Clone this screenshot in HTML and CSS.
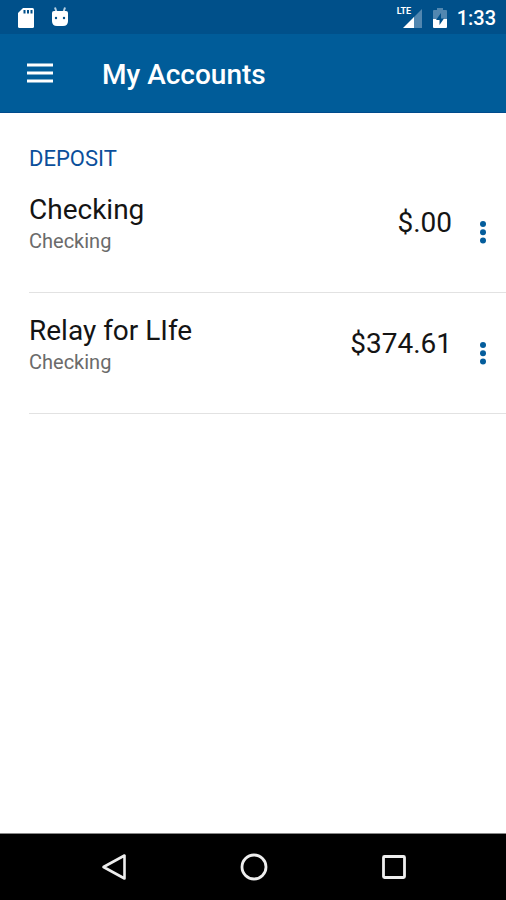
FILE: index.html
```html
<!DOCTYPE html>
<html lang="en">
<head>
<meta charset="utf-8">
<meta name="viewport" content="width=device-width, initial-scale=1">
<title>My Accounts</title>
<link rel="stylesheet" href="styles.css">
</head>
<body>
<div class="status-bar">
  <div class="status-group status-left">
    <svg class="icon-sd" viewBox="0 0 18 22" aria-hidden="true">
      <path fill="#fff" d="M6 1H15.500Q17 1 17 2.500V19.500Q17 21 15.500 21H2.500Q1 21 1 19.500V6Z"/>
      <path stroke="#00508a" stroke-width="2" d="M7.500 3V6.500M11 3V6.500M14.500 3V6.500"/>
    </svg>
    <svg class="icon-droid" viewBox="0 0 18 22" aria-hidden="true">
      <path stroke="#b9d3e5" stroke-width="2" fill="none" d="M4 0.500L5.500 5M14 0.500L12.500 5"/>
      <path fill="#fff" d="M1 6Q1 4 3 4H15Q17 4 17 6V14Q17 19 12 19H6Q1 19 1 14Z"/>
      <circle cx="5" cy="11" r="1.200" fill="#00508a"/>
      <circle cx="13" cy="11" r="1.200" fill="#00508a"/>
    </svg>
  </div>
  <div class="status-group status-right">
    <div class="signal">
      <span class="network">LTE</span>
      <svg class="icon-signal" viewBox="0 0 26 22" aria-hidden="true">
        <path fill="#5287b0" d="M25 2V21H16V11Z"/>
        <path fill="#fff" d="M17 10V21H6Z"/>
      </svg>
    </div>
    <svg class="icon-battery" viewBox="0 0 16 22" aria-hidden="true">
      <path fill="#5287b0" d="M5 1H11V3H14Q15 3 15 4V12H1V4Q1 3 2 3H5Z"/>
      <path fill="#fff" d="M1 12H15V20Q15 21 14 21H2Q1 21 1 20Z"/>
      <path fill="#00508a" d="M9 6L4 13H7.500V18L12 11.500H9Z"/>
    </svg>
    <span class="clock">1:33</span>
  </div>
</div>
<header class="app-bar">
  <button class="menu-button" type="button" aria-label="Menu">
    <svg viewBox="0 0 28 22" aria-hidden="true"><path stroke="#fff" stroke-width="3" d="M1 3H27M1 11H27M1 19H27"/></svg>
  </button>
  <h1 class="app-title">My Accounts</h1>
</header>
<main class="content">
  <h2 class="section-title">DEPOSIT</h2>
  <ul class="accounts">
    <li class="account">
      <div class="account-info">
        <h3 class="account-name">Checking</h3>
        <p class="account-type">Checking</p>
      </div>
      <span class="account-balance">$.00</span>
      <button class="more-button" type="button" aria-label="Options for Checking">
        <svg viewBox="0 0 8 24" aria-hidden="true"><g fill="#045d9c"><circle cx="4" cy="4" r="3"/><circle cx="4" cy="12.300" r="3"/><circle cx="4" cy="20.600" r="3"/></g></svg>
      </button>
    </li>
    <li class="account">
      <div class="account-info">
        <h3 class="account-name">Relay for LIfe</h3>
        <p class="account-type">Checking</p>
      </div>
      <span class="account-balance">$374.61</span>
      <button class="more-button" type="button" aria-label="Options for Relay for LIfe">
        <svg viewBox="0 0 8 24" aria-hidden="true"><g fill="#045d9c"><circle cx="4" cy="4" r="3"/><circle cx="4" cy="12.300" r="3"/><circle cx="4" cy="20.600" r="3"/></g></svg>
      </button>
    </li>
  </ul>
</main>
<nav class="nav-bar" aria-label="System">
  <button class="nav-button" type="button" aria-label="Back">
    <svg viewBox="0 0 28 28" aria-hidden="true"><path fill="none" stroke="#eee" stroke-width="2.600" stroke-linejoin="round" d="M24.500 2.500V25.500L3.500 14Z"/></svg>
  </button>
  <button class="nav-button" type="button" aria-label="Home">
    <svg viewBox="0 0 28 28" aria-hidden="true"><circle cx="14" cy="14" r="12" fill="none" stroke="#eee" stroke-width="2.800"/></svg>
  </button>
  <button class="nav-button" type="button" aria-label="Recent apps">
    <svg viewBox="0 0 28 28" aria-hidden="true"><rect x="3.500" y="3.500" width="21" height="21" rx="1" fill="none" stroke="#eee" stroke-width="2.800"/></svg>
  </button>
</nav>
</body>
</html>
```
FILE: styles.css
```css
* {
  box-sizing: border-box;
}

body {
  display: flex;
  flex-direction: column;
  min-height: 100vh;
  margin: 0;
  background: #fff;
  color: #141414;
  font-family: Roboto, "Liberation Sans", sans-serif;
}

h1, h2, h3, p, ul {
  margin: 0;
  padding: 0;
  font-weight: 400;
}

button {
  display: flex;
  align-items: center;
  justify-content: center;
  padding: 0;
  border: 0;
  background: none;
}

svg {
  display: block;
}

.status-bar {
  display: flex;
  align-items: center;
  justify-content: space-between;
  height: 34px;
  padding: 2px 10px 0 17px;
  background: #00508a;
}

.status-group {
  display: flex;
  align-items: center;
}

.status-left {
  gap: 16px;
}

.status-right {
  gap: 9px;
}

.icon-sd, .icon-droid {
  width: 18px;
  height: 22px;
}

.signal {
  position: relative;
}

.network {
  position: absolute;
  top: 0;
  left: 0;
  color: #fff;
  font-size: 9px;
  font-weight: 700;
  line-height: 9px;
}

.icon-signal {
  width: 26px;
  height: 22px;
}

.icon-battery {
  width: 16px;
  height: 22px;
}

.clock {
  color: #fff;
  font-size: 20px;
  font-weight: 500;
  line-height: 24px;
}

.app-bar {
  display: flex;
  align-items: center;
  gap: 48px;
  height: 79px;
  padding: 0 26px;
  border-bottom: 1px solid #004b8c;
  background: #005c99;
}

.menu-button svg {
  width: 28px;
  height: 22px;
}

.app-title {
  padding-top: 4px;
  color: #fff;
  font-size: 28px;
  font-weight: 500;
  line-height: 36px;
}

.content {
  flex: 1;
  padding: 33px 0 0 29px;
}

.section-title {
  color: #0b4f9b;
  font-size: 22px;
  line-height: 26px;
}

.accounts {
  list-style: none;
}

.account {
  display: flex;
  align-items: flex-start;
  padding: 20px 14px 39px 0;
  border-bottom: 1px solid #e2e2e2;
}

.account-info {
  flex: 1;
}

.account-name {
  font-size: 28px;
  line-height: 36px;
}

.account-type {
  padding-top: 1px;
  color: #6b6b6b;
  font-size: 20px;
  line-height: 24px;
}

.account-balance {
  padding-top: 13px;
  font-size: 28px;
  line-height: 36px;
}

.more-button {
  width: 18px;
  height: 40px;
  margin: 20px 0 0 22px;
}

.more-button svg {
  width: 8px;
  height: 24px;
}

.nav-bar {
  display: flex;
  justify-content: center;
  gap: 112px;
  height: 67px;
  padding-left: 1px;
  border-top: 1px solid #888;
  background: #000;
}

.nav-button svg {
  width: 28px;
  height: 28px;
}
```
